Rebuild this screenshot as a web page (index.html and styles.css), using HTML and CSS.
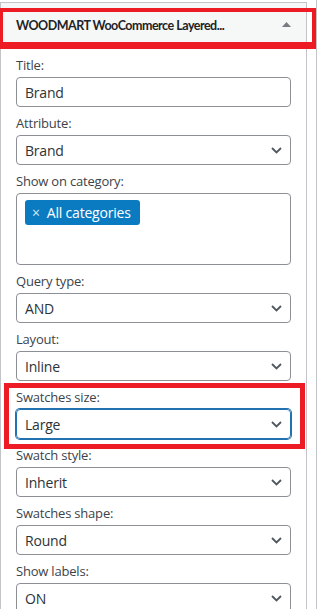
FILE: index.html
```html
<!DOCTYPE html>
<html lang="en">
<head>
<meta charset="utf-8">
<title>Widget</title>
<link rel="stylesheet" href="styles.css">
</head>
<body>
<div class="panel">
  <div class="header">
    <span class="title">WOODMART WooCommerce Layered...</span>
    <svg class="toggle" width="9" height="5" viewBox="0 0 9 5"><polygon points="0,5 4.5,0 9,5" fill="#787c82"/></svg>
  </div>
  <div class="content">
    <div class="field">
      <span class="label">Title:</span>
      <div class="control">Brand</div>
    </div>
    <div class="field">
      <span class="label">Attribute:</span>
      <div class="control">Brand<svg class="chev" width="11" height="7" viewBox="0 0 11 7"><polyline points="1,1 5.5,5.5 10,1" fill="none" stroke="#50575e" stroke-width="1.8"/></svg></div>
    </div>
    <div class="field">
      <span class="label">Show on category:</span>
      <div class="control multi"><span class="tag"><span class="x">×</span>All categories</span></div>
    </div>
    <div class="field">
      <span class="label">Query type:</span>
      <div class="control">AND<svg class="chev" width="11" height="7" viewBox="0 0 11 7"><polyline points="1,1 5.5,5.5 10,1" fill="none" stroke="#50575e" stroke-width="1.8"/></svg></div>
    </div>
    <div class="field">
      <span class="label">Layout:</span>
      <div class="control">Inline<svg class="chev" width="11" height="7" viewBox="0 0 11 7"><polyline points="1,1 5.5,5.5 10,1" fill="none" stroke="#50575e" stroke-width="1.8"/></svg></div>
    </div>
    <div class="field highlight">
      <span class="label">Swatches size:</span>
      <div class="control focus">Large<svg class="chev" width="11" height="7" viewBox="0 0 11 7"><polyline points="1,1 5.5,5.5 10,1" fill="none" stroke="#50575e" stroke-width="1.8"/></svg></div>
    </div>
    <div class="field">
      <span class="label">Swatch style:</span>
      <div class="control">Inherit<svg class="chev" width="11" height="7" viewBox="0 0 11 7"><polyline points="1,1 5.5,5.5 10,1" fill="none" stroke="#50575e" stroke-width="1.8"/></svg></div>
    </div>
    <div class="field">
      <span class="label">Swatches shape:</span>
      <div class="control">Round<svg class="chev" width="11" height="7" viewBox="0 0 11 7"><polyline points="1,1 5.5,5.5 10,1" fill="none" stroke="#50575e" stroke-width="1.8"/></svg></div>
    </div>
    <div class="field">
      <span class="label">Show labels:</span>
      <div class="control">ON<svg class="chev" width="11" height="7" viewBox="0 0 11 7"><polyline points="1,1 5.5,5.5 10,1" fill="none" stroke="#50575e" stroke-width="1.8"/></svg></div>
    </div>
  </div>
</div>
<div class="edge"></div>
</body>
</html>
```
FILE: styles.css
```css
html, body {
  margin: 0;
  padding: 0;
  background: #fff;
}
body {
  font-family: "Open Sans", "Noto Sans", sans-serif;
  display: flex;
  align-items: flex-start;
  height: 609px;
  overflow: hidden;
}
.panel {
  width: 307px;
  box-sizing: border-box;
  margin-top: 2px;
  border: 1px solid #c3c4c7;
  border-bottom: none;
  position: relative;
}
.edge {
  width: 1px;
  align-self: stretch;
  background: #c3c4c7;
  margin-left: 9px;
}
.header {
  height: 44px;
  background: #f6f7f7;
  display: flex;
  align-items: center;
  justify-content: space-between;
  padding: 0 15px;
  position: relative;
}
.header::after {
  content: "";
  position: absolute;
  left: -1px;
  top: 5px;
  width: 316px;
  height: 41px;
  box-sizing: border-box;
  border: 4px solid #ed1c24;
  border-bottom-width: 7px;
  border-left-width: 3px;
  pointer-events: none;
}
.title {
  font-family: "Lato", "Open Sans", sans-serif;
  font-size: 12.5px;
  font-weight: 700;
  color: #1d2327;
  letter-spacing: -0.5px;
  margin-top: 1px;
}
.toggle {
  display: block;
  margin-top: -1px;
}
.content {
  padding: 9px 15px 0;
}
.field {
  margin-bottom: 7px;
  position: relative;
}
.label {
  display: block;
  font-size: 13px;
  line-height: 18px;
  color: #3c434a;
  letter-spacing: -0.2px;
}
.control {
  margin-top: 3px;
  height: 30px;
  box-sizing: border-box;
  border: 1px solid #8c8f94;
  border-radius: 4px;
  padding: 0 8px;
  display: flex;
  align-items: center;
  justify-content: space-between;
  font-size: 14px;
  color: #2c3338;
  letter-spacing: -0.2px;
}
.chev {
  display: block;
}
.multi {
  height: 72px;
  align-items: flex-start;
  padding: 6px 8px;
}
.tag {
  background: #0a7bc1;
  color: #fff;
  border-radius: 3px;
  height: 25px;
  padding: 0 9px 0 7px;
  display: flex;
  align-items: center;
  gap: 7px;
  font-size: 14px;
}
.x {
  font-size: 14px;
  color: #d6e8f4;
}
.focus {
  border-color: #2271b1;
  box-shadow: 0 0 0 1px #2271b1;
}
.highlight::before {
  content: "";
  position: absolute;
  top: -5px;
  left: -12px;
  right: -14px;
  bottom: -10px;
  border: 5px solid #ed1c24;
  pointer-events: none;
}
```
